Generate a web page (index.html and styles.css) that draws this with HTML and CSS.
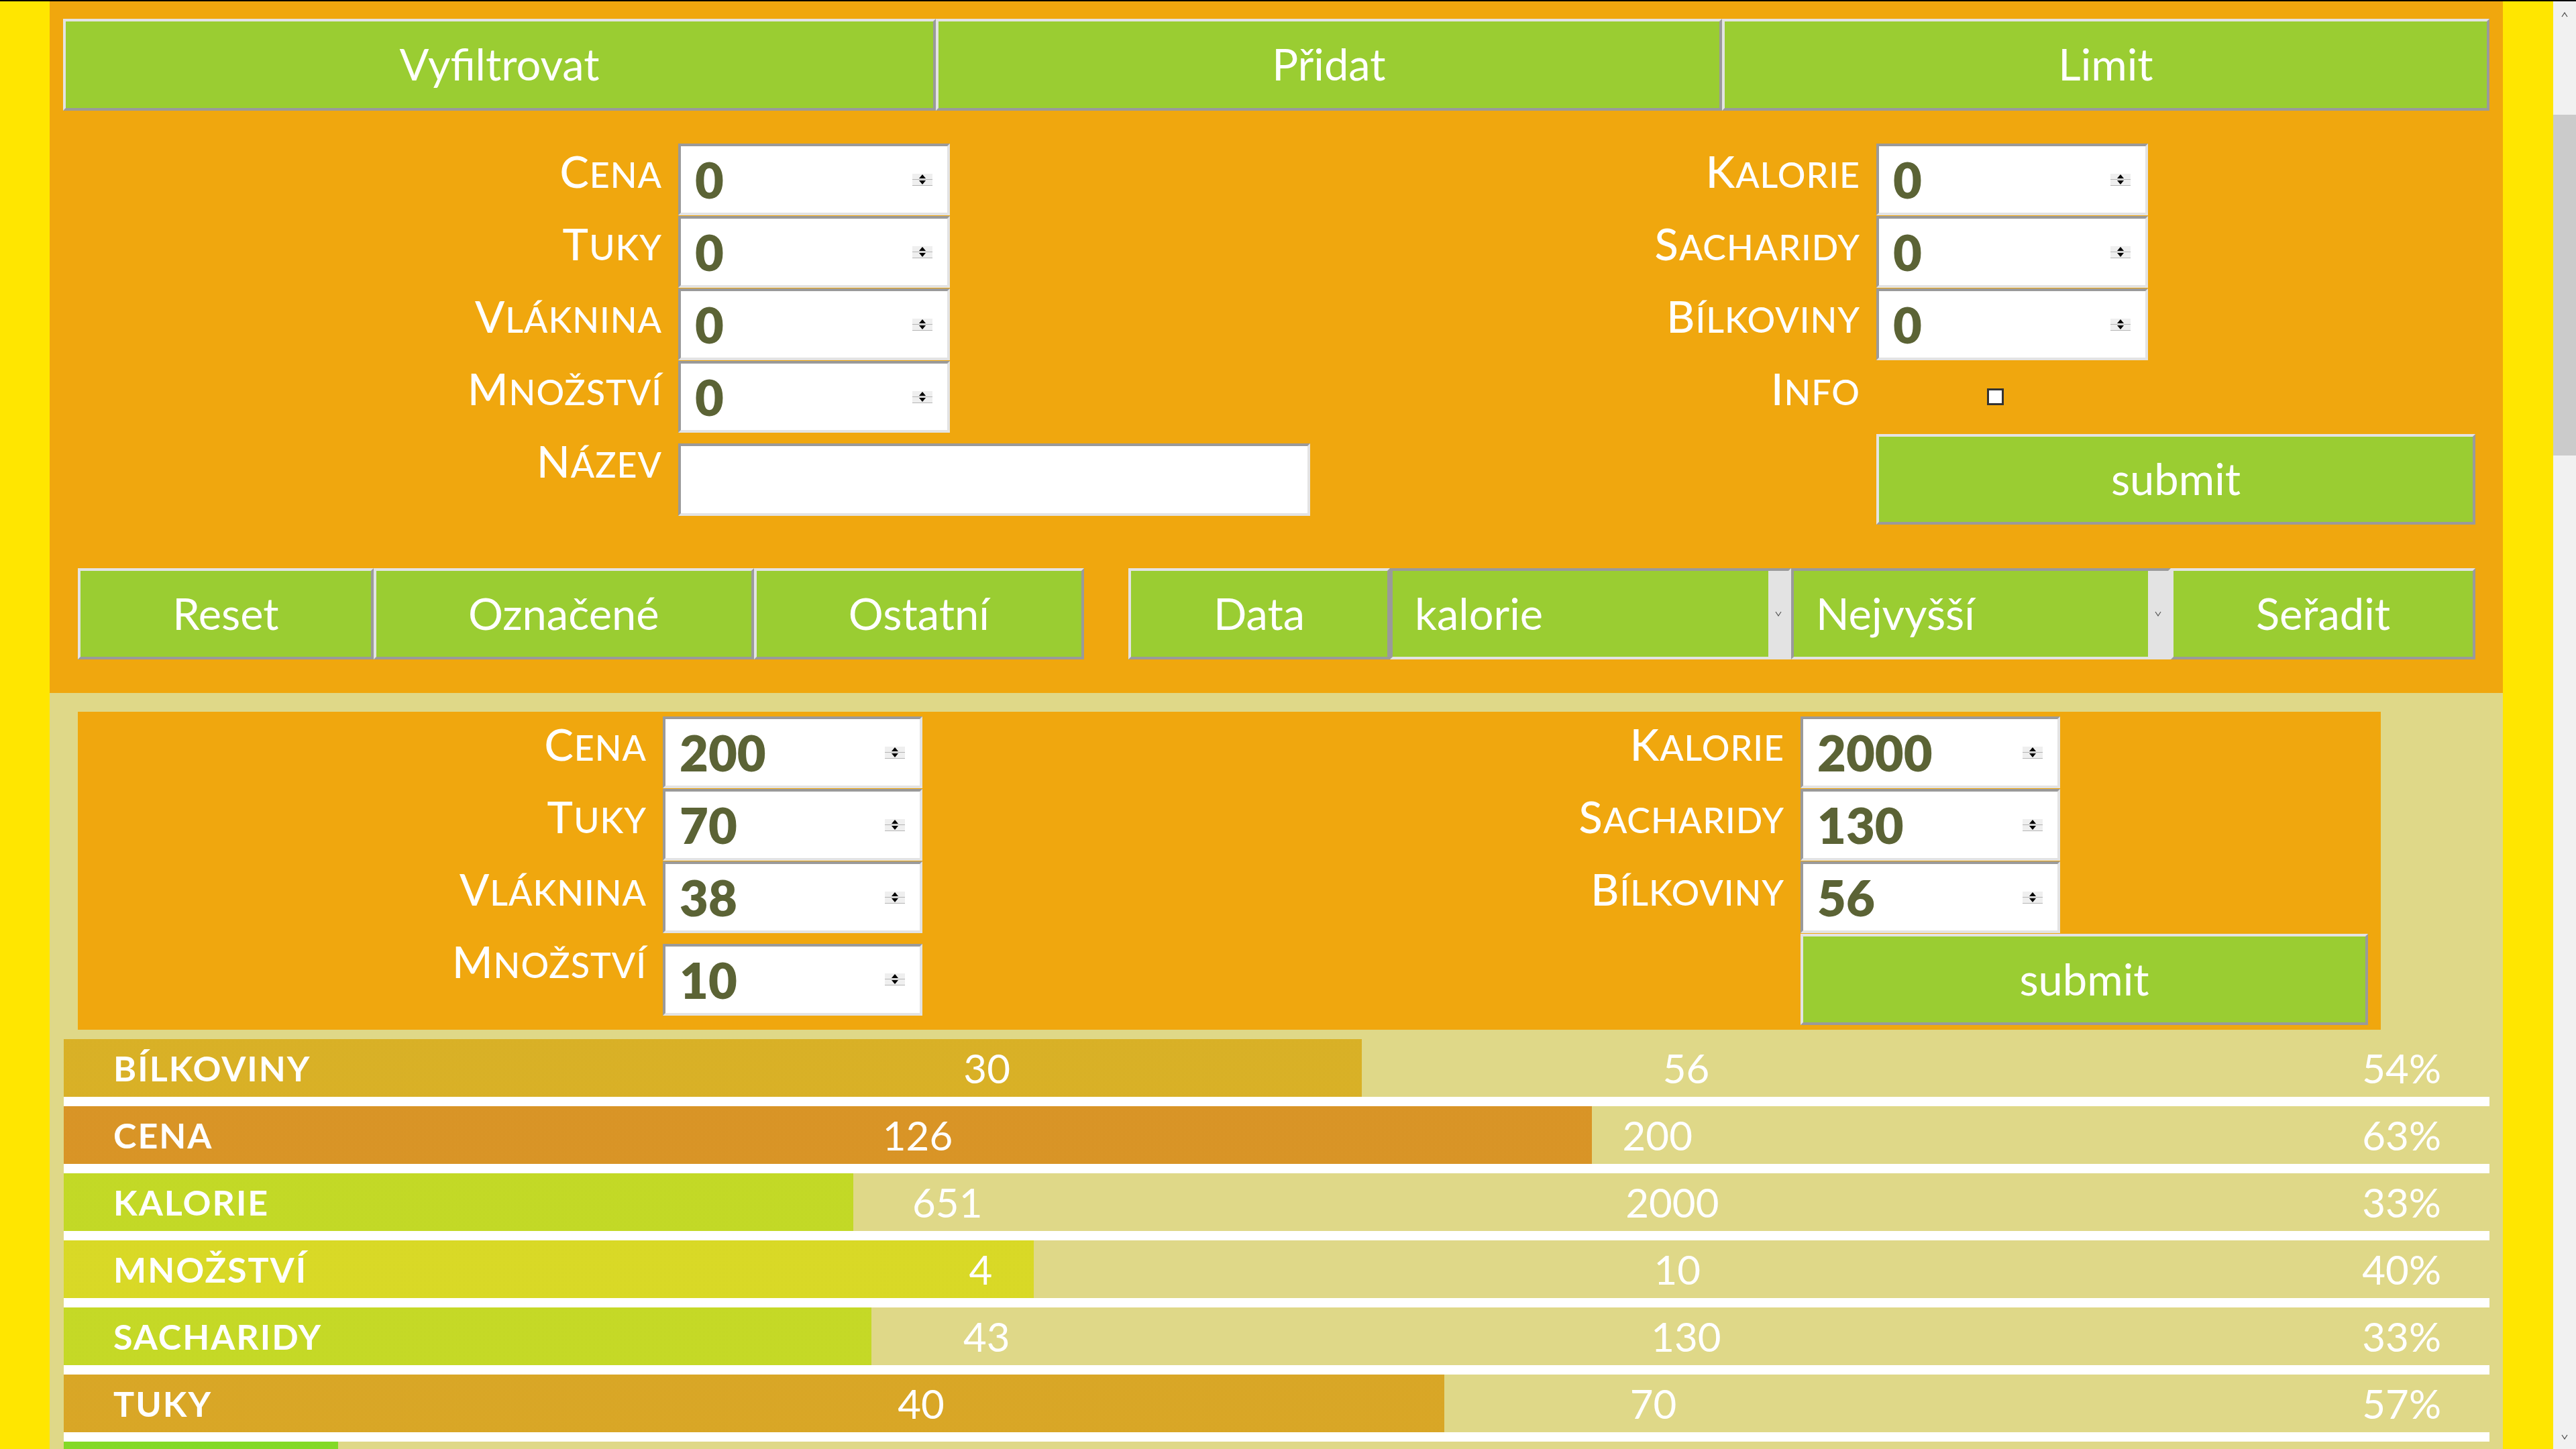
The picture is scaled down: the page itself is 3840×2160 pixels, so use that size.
FILE: index.html
```html
<!DOCTYPE html>
<html lang="cs">
  <head>
    <meta charset="UTF-8" />
    <meta name="viewport" content="width=device-width, initial-scale=1.0" />
    <title>Jídelníček</title>
    <link rel="stylesheet" href="styles.css">
  </head>
  <body>
    <div id="page">
      <div id="main">
        <div id="container">
          <div id="panel">
            <div class="tabs">
              <button class="btn">Vyfiltrovat</button>
              <button class="btn">Přidat</button>
              <button class="btn">Limit</button>
            </div>

            <form class="form add">
              <label>Cena</label>
              <span class="num"><input value="0" /><span class="spin"><i></i><i></i></span></span>
              <label>Kalorie</label>
              <span class="num"><input value="0" /><span class="spin"><i></i><i></i></span></span>

              <label>Tuky</label>
              <span class="num"><input value="0" /><span class="spin"><i></i><i></i></span></span>
              <label>Sacharidy</label>
              <span class="num"><input value="0" /><span class="spin"><i></i><i></i></span></span>

              <label>Vláknina</label>
              <span class="num"><input value="0" /><span class="spin"><i></i><i></i></span></span>
              <label>Bílkoviny</label>
              <span class="num"><input value="0" /><span class="spin"><i></i><i></i></span></span>

              <label>Množství</label>
              <span class="num"><input value="0" /><span class="spin"><i></i><i></i></span></span>
              <label>Info</label>
              <span class="check"><input type="checkbox" /></span>

              <label>Název</label>
              <input class="text" />
              <span></span>
              <button type="button" class="btn submit">submit</button>
            </form>

            <div class="tools">
              <div class="group left">
                <button class="btn">Reset</button>
                <button class="btn">Označené</button>
                <button class="btn">Ostatní</button>
              </div>
              <div class="group right">
                <button class="btn">Data</button>
                <span class="drop wide">
                  <select><option>kalorie</option></select>
                  <span class="arrow"><svg width="10" height="8" viewBox="0 0 10 8"><polyline points="1,1 5,7 9,1" fill="none" stroke="#555" stroke-width="1.2" /></svg></span>
                </span>
                <span class="drop">
                  <select><option>Nejvyšší</option></select>
                  <span class="arrow"><svg width="10" height="8" viewBox="0 0 10 8"><polyline points="1,1 5,7 9,1" fill="none" stroke="#555" stroke-width="1.2" /></svg></span>
                </span>
                <button class="btn">Seřadit</button>
              </div>
            </div>
          </div>

          <div id="limits">
            <form class="form limit">
              <label>Cena</label>
              <span class="num"><input value="200" /><span class="spin"><i></i><i></i></span></span>
              <label>Kalorie</label>
              <span class="num"><input value="2000" /><span class="spin"><i></i><i></i></span></span>

              <label>Tuky</label>
              <span class="num"><input value="70" /><span class="spin"><i></i><i></i></span></span>
              <label>Sacharidy</label>
              <span class="num"><input value="130" /><span class="spin"><i></i><i></i></span></span>

              <label>Vláknina</label>
              <span class="num"><input value="38" /><span class="spin"><i></i><i></i></span></span>
              <label>Bílkoviny</label>
              <span class="num"><input value="56" /><span class="spin"><i></i><i></i></span></span>

              <label>Množství</label>
              <span class="num"><input value="10" /><span class="spin"><i></i><i></i></span></span>
              <span></span>
              <button type="button" class="btn submit">submit</button>
            </form>

            <div class="bars">
              <div class="bar" style="--p: 53.5"><span class="name">Bílkoviny</span><span>30</span><span>56</span><span>54%</span></div>
              <div class="bar" style="--p: 63"><span class="name">Cena</span><span>126</span><span>200</span><span>63%</span></div>
              <div class="bar" style="--p: 32.55"><span class="name">Kalorie</span><span>651</span><span>2000</span><span>33%</span></div>
              <div class="bar" style="--p: 40"><span class="name">Množství</span><span>4</span><span>10</span><span>40%</span></div>
              <div class="bar" style="--p: 33.3"><span class="name">Sacharidy</span><span>43</span><span>130</span><span>33%</span></div>
              <div class="bar" style="--p: 56.9"><span class="name">Tuky</span><span>40</span><span>70</span><span>57%</span></div>
              <div class="bar" style="--p: 11.3"><span class="name">Vláknina</span><span>4.3</span><span>38</span><span>11%</span></div>
            </div>
          </div>
        </div>
      </div>

      <div class="scrollbar">
        <span class="up"><svg width="10" height="8" viewBox="0 0 10 8"><polyline points="1,7 5,1 9,7" fill="none" stroke="#505050" stroke-width="1.3" /></svg></span>
        <span class="thumb"></span>
        <span class="down"><svg width="10" height="8" viewBox="0 0 10 8"><polyline points="1,1 5,7 9,1" fill="none" stroke="#505050" stroke-width="1.3" /></svg></span>
      </div>
    </div>
  </body>
</html>
```

FILE: styles.css
```css
body {
  margin: 0;
  padding: 0;
  overflow: hidden;
  font-family: Lato, "Open Sans", sans-serif;
  background-color: #000;
}
#page {
  display: flex;
  height: 2160px;
  border-top: 2px solid #000;
  box-sizing: border-box;
}
#main {
  flex: 1;
  overflow: hidden;
  background-color: #ffe600;
}
#container {
  width: 3657px;
  margin-left: 74px;
}

/* horni oranzovy panel */
#panel {
  background-color: #f0a70e;
  padding: 26px 20px 50px;
}
.tabs {
  display: flex;
}
.btn {
  font-family: inherit;
  font-size: 65px;
  color: white;
  background-color: #9acd32;
  border: 4px solid;
  border-color: #e3e3e3 #9a9a9a #9a9a9a #e3e3e3;
  box-sizing: border-box;
  padding: 0 0 3px;
  cursor: pointer;
}
.tabs .btn {
  flex: 1 1 auto;
  height: 137px;
}

/* formulare */
.form {
  display: grid;
  row-gap: 1px;
}
.form label {
  align-self: start;
  padding: 2px 24px 0 0;
  text-align: right;
  color: white;
  font-size: 52px;
  font-weight: 500;
  text-transform: uppercase;
  letter-spacing: 1px;
}
.form label::first-letter {
  font-size: 65px;
}
.add {
  margin-top: 49px;
  grid-template-columns: 917px 942px 844px 893px;
  grid-template-rows: repeat(4, 107px) 137px;
}
.num {
  display: flex;
  align-items: center;
  justify-content: space-between;
  align-self: center;
  width: 405px;
  height: 107px;
  box-sizing: border-box;
  padding: 0 22px 0 21px;
  background-color: white;
  border: 4px solid;
  border-color: #9a9a9a #e3e3e3 #e3e3e3 #9a9a9a;
}
.num input {
  width: 250px;
  padding: 0;
  border: 0;
  outline: 0;
  background: transparent;
  font-family: inherit;
  font-weight: 800;
  font-size: 74px;
  color: #5b6335;
}
.spin {
  display: flex;
  flex-direction: column;
  width: 30px;
}
.spin i {
  display: flex;
  justify-content: center;
  align-items: center;
  height: 8px;
  background-color: #efefef;
  border-bottom: 1px solid #b5b5b5;
}
.spin i::before {
  content: "";
  border-left: 5px solid transparent;
  border-right: 5px solid transparent;
  border-bottom: 6px solid #000;
}
.spin i + i::before {
  border-bottom: 0;
  border-top: 6px solid #000;
}
.text {
  align-self: center;
  width: 942px;
  height: 108px;
  box-sizing: border-box;
  border: 4px solid;
  border-color: #9a9a9a #e3e3e3 #e3e3e3 #9a9a9a;
  background-color: white;
  outline: 0;
}
.check {
  align-self: center;
  padding-left: 165px;
}
.check input {
  appearance: none;
  display: block;
  width: 25px;
  height: 25px;
  margin: 0;
  box-sizing: border-box;
  border: 3px solid #333;
  background-color: white;
}
.submit {
  align-self: center;
  width: 100%;
  height: 135px;
}

/* razeni */
.tools {
  display: flex;
  justify-content: space-between;
  margin: 64px 21px 0 22px;
}
.group {
  display: flex;
}
.group.left {
  width: 1500px;
}
.group.right {
  width: 2008px;
}
.tools .btn {
  flex: 1 1 auto;
  height: 136px;
}
.drop {
  display: flex;
  width: 566px;
  height: 136px;
  box-sizing: border-box;
  background-color: #9acd32;
  border: 4px solid;
  border-color: #9a9a9a #e3e3e3 #e3e3e3 #9a9a9a;
}
.drop.wide {
  width: 598px;
}
.drop select {
  flex: 1;
  appearance: none;
  border: 0;
  outline: 0;
  padding: 0 0 3px 33px;
  background: transparent;
  color: white;
  font-family: inherit;
  font-size: 65px;
}
.drop .arrow {
  display: flex;
  align-items: center;
  justify-content: center;
  width: 30px;
  background-color: #e3e3e3;
}

/* limity */
#limits {
  background-color: #dfd888;
  padding: 28px 20px 0 21px;
  height: 1200px;
}
.limit {
  width: max-content;
  margin-left: 21px;
  padding: 7px 19px 7px 0;
  background-color: #f0a70e;
  grid-template-columns: 872px 387px 1309px 846px;
  grid-template-rows: repeat(3, 107px) 136px;
}
.limit .num {
  width: 387px;
}
.limit .submit {
  height: 136px;
}
.bars {
  margin-top: 14px;
}
.bar {
  display: flex;
  justify-content: space-between;
  align-items: center;
  height: 86px;
  padding: 0 72px 0 74px;
  border-bottom: 14px solid white;
  color: white;
  font-size: 60px;
  background: linear-gradient(90deg, hsl(calc(100 - var(--p)), 70%, 50%) calc(var(--p) * 1%), transparent 0);
}
.bar .name {
  font-size: 52px;
  font-weight: bold;
  text-transform: uppercase;
  letter-spacing: 2px;
}

/* posuvnik */
.scrollbar {
  display: flex;
  flex-direction: column;
  width: 34px;
  background-color: #f1f1f1;
}
.scrollbar .up,
.scrollbar .down {
  display: flex;
  align-items: center;
  justify-content: center;
  height: 40px;
}
.scrollbar .thumb {
  margin-top: 129px;
  height: 508px;
  background-color: #cbcbcb;
}
.scrollbar .down {
  margin-top: auto;
  height: 36px;
}
```
